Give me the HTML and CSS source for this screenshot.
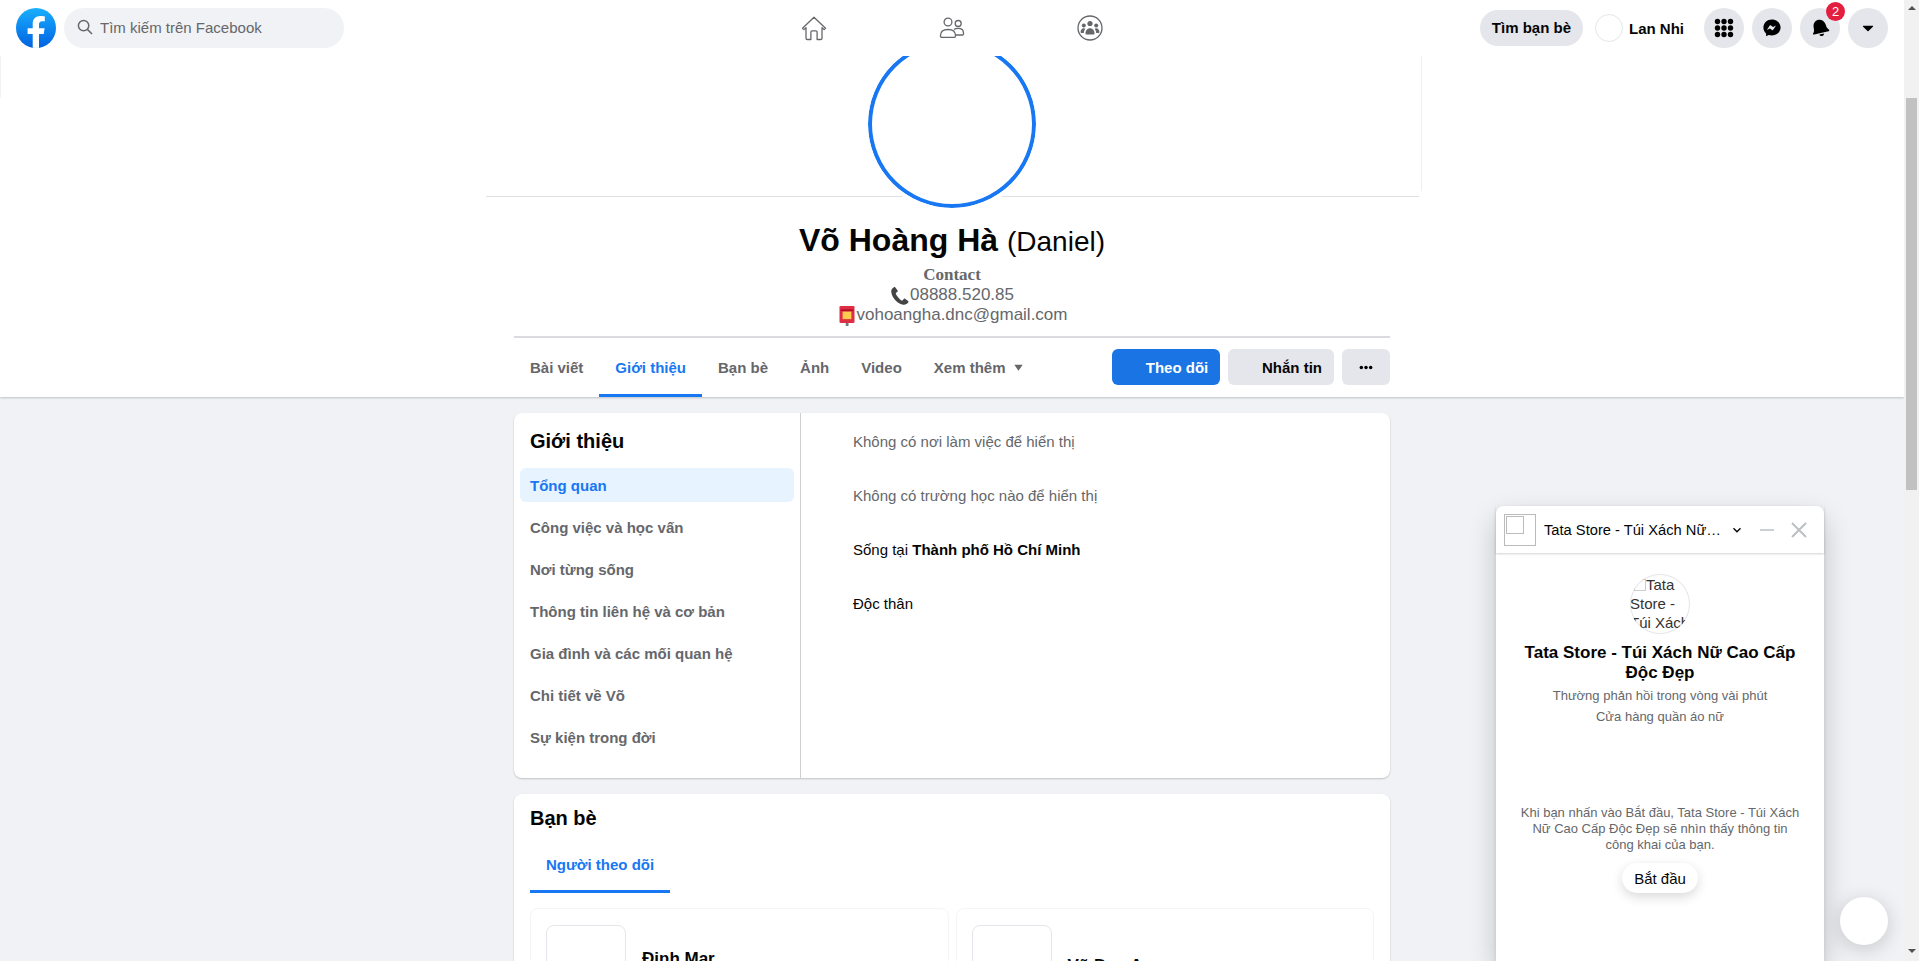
FILE: index.html
```html
<!DOCTYPE html>
<html lang="vi">
<head>
    <meta charset="UTF-8">
    <meta name="viewport" content="width=device-width, initial-scale=1.0">
    <title>Võ Hoàng Hà (Daniel) | Facebook</title>
    <link rel="stylesheet" href="styles.css">
</head>
<body>
    <div class="window">
        <div class="page">
            <!-- Top bar -->
            <header class="topbar">
                <div class="topbar-left">
                    <svg class="fb-logo" viewBox="0 0 40 40">
                        <defs>
                            <linearGradient id="fbGrad" x1="0" y1="0" x2="0" y2="1">
                                <stop offset="0" stop-color="#19afff"/>
                                <stop offset="1" stop-color="#0062e0"/>
                            </linearGradient>
                            <clipPath id="fbClip"><circle cx="20" cy="20" r="20"/></clipPath>
                        </defs>
                        <circle cx="20" cy="20" r="20" fill="url(#fbGrad)"/>
                        <path clip-path="url(#fbClip)" fill="#fff" d="M16.700 40V26h-5.100v-5.800h5.100v-4.400c0-5.100 3-7.900 7.600-7.900 2.200 0 4.500.4 4.500.4v5h-2.500c-2.500 0-3.300 1.600-3.300 3.100v3.800h5.600l-.9 5.800h-4.700v14z"/>
                    </svg>
                    <div class="search">
                        <svg class="search-icon" viewBox="0 0 16 16"><circle cx="6.600" cy="6.600" r="5.200"/><path d="M10.400 10.400l4.600 4.600"/></svg>
                        <span>Tìm kiếm trên Facebook</span>
                    </div>
                </div>
                <nav class="topbar-nav">
                    <svg class="nav-icon" viewBox="0 0 26 26"><path d="M1.500 13.200L13 2.200l11.500 11-1.400 1.400-2.100-2v10.600a1.300 1.300 0 0 1-1.300 1.300h-3.600v-7.400a1.200 1.200 0 0 0-1.200-1.200h-3.800a1.200 1.200 0 0 0-1.200 1.200v7.400H6.300A1.300 1.300 0 0 1 5 23.200V12.600l-2.100 2z"/></svg>
                    <svg class="nav-icon" viewBox="0 0 26 26"><circle cx="9" cy="7" r="3.900"/><circle cx="19.200" cy="8.500" r="3"/><path d="M1.500 20.500c0-3.800 3-6 7.500-6s7.500 2.200 7.500 6v.6a1.200 1.200 0 0 1-1.200 1.200H2.700a1.200 1.200 0 0 1-1.200-1.200z"/><path d="M15 14.600c1-.8 2.600-1.200 4.200-1.200 3.400 0 5.300 2 5.300 4.800v.8a1 1 0 0 1-1 1h-7"/></svg>
                    <svg class="nav-icon" viewBox="0 0 26 26"><circle cx="13" cy="13" r="12"/><g class="fill"><circle cx="13" cy="8.500" r="2.600"/><circle cx="6.800" cy="10.500" r="2"/><circle cx="19.200" cy="10.500" r="2"/><path d="M8.500 18.500c0-3 2-5.200 4.500-5.200s4.500 2.200 4.500 5.200c0 .6-.4 1-1 1h-7c-.6 0-1-.4-1-1z"/><path d="M3.600 17c0-2 1.200-3.800 3.200-3.800.7 0 1.200.2 1.600.5-1 1.100-1.500 2.500-1.600 4.300H4.600c-.6 0-1-.4-1-1z"/><path d="M22.400 17c0-2-1.200-3.800-3.200-3.800-.7 0-1.200.2-1.600.5 1 1.100 1.500 2.500 1.600 4.300h2.200c.6 0 1-.4 1-1z"/></g></svg>
                </nav>
                <div class="topbar-right">
                    <a class="find-friends">Tìm bạn bè</a>
                    <div class="me">
                        <span class="me-avatar"></span>
                        <span>Lan Nhi</span>
                    </div>
                    <div class="round-btns">
                        <span class="round-btn">
                            <svg class="icon-20" viewBox="0 0 20 20"><circle cx="3.500" cy="3.500" r="2.700"/><circle cx="10" cy="3.500" r="2.700"/><circle cx="16.500" cy="3.500" r="2.700"/><circle cx="3.500" cy="10" r="2.700"/><circle cx="10" cy="10" r="2.700"/><circle cx="16.500" cy="10" r="2.700"/><circle cx="3.500" cy="16.500" r="2.700"/><circle cx="10" cy="16.500" r="2.700"/><circle cx="16.500" cy="16.500" r="2.700"/></svg>
                        </span>
                        <span class="round-btn">
                            <svg class="icon-20" viewBox="0 0 20 20"><path d="M10 1.500c-4.900 0-8.600 3.500-8.600 8.100 0 2.400 1 4.500 2.700 6v2.700l2.500-1.400c1 .3 2.200.5 3.400.5 4.900 0 8.600-3.500 8.600-7.800S14.900 1.500 10 1.500z"/><path fill="#e4e6eb" d="M4.900 12l2.800-4.400c.3-.4.800-.5 1.200-.2l2.100 1.600 3-1.600-2.800 4.400c-.3.400-.8.500-1.200.2L7.900 10.400z"/></svg>
                        </span>
                        <span class="round-btn">
                            <svg class="icon-20" viewBox="0 0 20 20"><g transform="rotate(-14 10 10)"><path d="M2.800 15c-.9 0-1.300-1-.7-1.600 1-1 1.600-2.200 1.700-3.500l.2-2.300C4.300 4.300 6.900 1.600 10.200 1.600c3.300 0 5.800 2.700 6.100 6.100l.2 2.500c.1 1.300.8 2.500 1.700 3.300.6.600.2 1.700-.7 1.700z"/><path d="M7.800 16.200h4.700c-.2 1.200-1.200 2.100-2.400 2.100s-2.100-.9-2.300-2.100z"/></g></svg>
                            <span class="badge">2</span>
                        </span>
                        <span class="round-btn">
                            <svg class="icon-20" viewBox="0 0 20 20"><path d="M5.500 7.800h9c.5 0 .8.600.4 1l-4.400 4.300c-.3.300-.7.300-1 0L5.100 8.800c-.4-.4-.1-1 .4-1z"/></svg>
                        </span>
                    </div>
                </div>
            </header>

            <main class="content">
                <!-- Cover and name -->
                <section class="profile-head">
                    <div class="cover-box">
                        <div class="profile-ring"></div>
                    </div>
                    <h1 class="profile-name">Võ Hoàng Hà <span class="alt-name">(Daniel)</span></h1>
                    <div class="bio">
                        <div class="bio-title">Contact</div>
                        <div class="bio-line">
                            <svg class="bio-icon" viewBox="0 0 16 16"><path d="M3.200 1c-1.300.7-2.400 2-2.200 3.600.4 4.700 5.200 10 9.700 10.400 1.600.2 3.200-.7 4-2 .2-.4.1-.8-.2-1L12 10.200c-.4-.2-.8-.1-1 .2l-.8 1c-.3.3-.7.4-1 .2C7.500 10.400 5.600 8.300 4.700 6.400c-.2-.4-.1-.8.2-1l1-.8c.3-.3.4-.7.2-1L4.300 1.200C4 .9 3.600.8 3.200 1z"/></svg>08888.520.85
                        </div>
                        <div class="bio-line">
                            <svg class="bio-icon" viewBox="0 0 16 16"><rect x="7" y="13" width="2.200" height="3" fill="#777"/><rect x="2" y="0" width="12" height="13.500" rx="1" fill="#dd2e44"/><rect x="3" y="2.800" width="10" height="1" fill="#a0041e"/><rect x="4.500" y="4.500" width="7" height="6" fill="#ffcc4d"/></svg>vohoangha.dnc@gmail.com
                        </div>
                    </div>
                    <div class="profile-tabs">
                        <div class="tab-list">
                            <a class="tab">Bài viết</a>
                            <a class="tab active">Giới thiệu</a>
                            <a class="tab">Bạn bè</a>
                            <a class="tab">Ảnh</a>
                            <a class="tab">Video</a>
                            <a class="tab">Xem thêm <svg class="tab-caret" viewBox="0 0 10 10"><path d="M1.200 2.500h7.600L5 8z"/></svg></a>
                        </div>
                        <div class="tab-actions">
                            <button class="btn btn-follow">Theo dõi</button>
                            <button class="btn btn-message">Nhắn tin</button>
                            <button class="btn btn-more"><svg viewBox="0 0 12 4"><circle cx="2" cy="2" r="1.500"/><circle cx="6" cy="2" r="1.500"/><circle cx="10" cy="2" r="1.500"/></svg></button>
                        </div>
                    </div>
                </section>

                <div class="columns">
                    <!-- About -->
                    <section class="card about">
                        <div class="about-menu">
                            <h2 class="card-title">Giới thiệu</h2>
                            <ul class="about-list">
                                <li class="selected">Tổng quan</li>
                                <li>Công việc và học vấn</li>
                                <li>Nơi từng sống</li>
                                <li>Thông tin liên hệ và cơ bản</li>
                                <li>Gia đình và các mối quan hệ</li>
                                <li>Chi tiết về Võ</li>
                                <li>Sự kiện trong đời</li>
                            </ul>
                        </div>
                        <div class="about-body">
                            <p class="muted">Không có nơi làm việc để hiển thị</p>
                            <p class="muted">Không có trường học nào để hiển thị</p>
                            <p>Sống tại <b>Thành phố Hồ Chí Minh</b></p>
                            <p>Độc thân</p>
                        </div>
                    </section>

                    <!-- Friends -->
                    <section class="card friends">
                        <h2 class="card-title">Bạn bè</h2>
                        <div class="friends-tabs"><a class="friends-tab">Người theo dõi</a></div>
                        <div class="friend-grid">
                            <div class="friend">
                                <div class="friend-photo"></div>
                                <div class="friend-name">Đinh Mar</div>
                            </div>
                            <div class="friend">
                                <div class="friend-photo"></div>
                                <div class="friend-name second">Vũ Duy An</div>
                            </div>
                        </div>
                    </section>
                </div>
            </main>

            <!-- Chat plugin -->
            <aside class="chat">
                <div class="chat-head">
                    <span class="broken-img"></span>
                    <span class="chat-title">Tata Store - Túi Xách Nữ Cao Cấp Độc Đẹp</span>
                    <svg class="chat-chevron" viewBox="0 0 10 10"><path d="M1.500 3.300L5 6.800l3.500-3.500"/></svg>
                    <svg class="chat-min" viewBox="0 0 16 16"><path d="M1 8h14"/></svg>
                    <svg class="chat-close" viewBox="0 0 16 16"><path d="M1 1l14 14M15 1L1 15"/></svg>
                </div>
                <div class="chat-body">
                    <div class="chat-avatar"><span class="chat-alt"><span class="broken-mini"></span>Tata Store - Túi Xách</span></div>
                    <div class="chat-name">Tata Store - Túi Xách Nữ Cao Cấp Độc Đẹp</div>
                    <div class="chat-note">Thường phản hồi trong vòng vài phút</div>
                    <div class="chat-note">Cửa hàng quần áo nữ</div>
                    <div class="chat-spacer"></div>
                    <div class="chat-terms">Khi bạn nhấn vào Bắt đầu, Tata Store - Túi Xách Nữ Cao Cấp Độc Đẹp sẽ nhìn thấy thông tin công khai của bạn.</div>
                    <button class="chat-start">Bắt đầu</button>
                </div>
            </aside>
            <div class="chat-bubble"></div>
        </div>

        <!-- Scrollbar -->
        <div class="scrollbar">
            <span class="arrow-up"></span>
            <span class="scroll-thumb"></span>
            <span class="arrow-down"></span>
        </div>
    </div>
</body>
</html>
```

FILE: styles.css
```css
/* General */
* {
    box-sizing: border-box;
}

html, body {
    margin: 0;
    padding: 0;
    height: 100%;
    overflow: hidden;
}

body {
    font-family: 'Liberation Sans', Arial, sans-serif;
    font-size: 15px;
    color: #050505;
    background-color: #f0f2f5;
}

.window {
    display: flex;
    height: 961px;
}

.page {
    position: relative;
    flex: 1;
    min-width: 0;
    display: flex;
    flex-direction: column;
    overflow: hidden;
}

/* Top bar */
.topbar {
    flex: none;
    height: 56px;
    display: grid;
    grid-template-columns: 1fr auto 1fr;
    align-items: center;
    padding: 0 16px;
    background-color: #fff;
    position: relative;
    z-index: 2;
}

.topbar-left {
    display: flex;
    align-items: center;
    gap: 8px;
}

.fb-logo {
    width: 40px;
    height: 40px;
}

.search {
    width: 280px;
    height: 40px;
    display: flex;
    align-items: center;
    gap: 7px;
    padding: 0 0 2px 13px;
    border-radius: 20px;
    background-color: #f0f2f5;
    color: #65676b;
}

.search-icon {
    width: 16px;
    height: 16px;
    fill: none;
    stroke: #65676b;
    stroke-width: 1.5;
}

.topbar-nav {
    display: flex;
    gap: 112px;
    align-items: center;
}

.nav-icon {
    width: 26px;
    height: 26px;
    fill: none;
    stroke: #65676b;
    stroke-width: 1.3;
    stroke-linejoin: round;
}

.nav-icon .fill {
    fill: #65676b;
    stroke: none;
}

.topbar-right {
    display: flex;
    align-items: center;
    justify-content: flex-end;
}

.find-friends {
    height: 36px;
    line-height: 36px;
    padding: 0 12px;
    border-radius: 18px;
    background-color: #e4e6eb;
    font-weight: bold;
}

.me {
    display: flex;
    align-items: center;
    gap: 6px;
    margin-left: 12px;
    font-weight: bold;
}

.me-avatar {
    width: 28px;
    height: 28px;
    border-radius: 50%;
    border: 1px solid #e4e6eb;
}

.round-btns {
    display: flex;
    gap: 8px;
    margin-left: 20px;
}

.round-btn {
    position: relative;
    width: 40px;
    height: 40px;
    display: flex;
    align-items: center;
    justify-content: center;
    border-radius: 50%;
    background-color: #e4e6eb;
}

.icon-20 {
    width: 20px;
    height: 20px;
}

.badge {
    position: absolute;
    top: -6px;
    right: -5px;
    width: 19px;
    height: 19px;
    line-height: 19px;
    border-radius: 50%;
    text-align: center;
    font-size: 13px;
    color: #fff;
    background-color: #e41e3f;
}

/* Scrollbar */
.scrollbar {
    flex: none;
    width: 15px;
    display: flex;
    flex-direction: column;
    align-items: center;
    background-color: #f1f1f1;
}

.arrow-up, .arrow-down {
    flex: none;
    width: 0;
    height: 0;
    border-left: 4px solid transparent;
    border-right: 4px solid transparent;
}

.arrow-up {
    margin-top: 6px;
    border-bottom: 4px solid #505050;
}

.arrow-down {
    margin-top: 459px;
    border-top: 4px solid #505050;
}

.scroll-thumb {
    flex: none;
    width: 11px;
    height: 392px;
    margin-top: 88px;
    background-color: #c1c1c1;
}

/* Profile head */
.content {
    flex: 1;
    min-height: 0;
    overflow: hidden;
}

.profile-head {
    position: relative;
    height: 341px;
    background-color: #fff;
    box-shadow: 0 1px 2px rgba(0, 0, 0, 0.2);
}

.profile-head::before {
    content: "";
    position: absolute;
    top: 0;
    left: 0;
    width: 1px;
    height: 42px;
    background-color: #f2f2f2;
}

.cover-box {
    position: relative;
    width: 933px;
    height: 141px;
    margin-left: 486px;
    border-bottom: 1px solid #dddfe2;
}

.cover-box::after {
    content: "";
    position: absolute;
    top: 0;
    left: 935px;
    width: 1px;
    height: 135px;
    background-color: #f0f0f0;
}

.profile-ring {
    position: absolute;
    left: 378px;
    bottom: -16px;
    width: 176px;
    height: 176px;
    border-radius: 50%;
    background-color: #fff;
    border: 4px solid #fff;
    box-shadow: inset 0 0 0 4px #1877f2;
}

.profile-name {
    margin: 24px 0 0;
    text-align: center;
    font-size: 32px;
    line-height: 38px;
    font-weight: bold;
    color: #050505;
}

.alt-name {
    font-size: 28px;
    font-weight: normal;
}

.bio {
    margin-top: 4px;
    text-align: center;
    font-size: 17px;
    line-height: 20px;
    color: #65676b;
}

.bio-title {
    font-family: 'Liberation Serif', serif;
    font-size: 17px;
    font-weight: bold;
}

.bio-icon {
    width: 20px;
    height: 20px;
    margin: -2px 0;
    vertical-align: -4px;
    fill: #444;
}

.profile-tabs {
    width: 876px;
    height: 61px;
    margin: 11px auto 0;
    display: flex;
    justify-content: space-between;
    border-top: 2px solid #d9dbdf;
}

.tab-list {
    display: flex;
}

.tab {
    display: flex;
    align-items: center;
    gap: 7px;
    padding: 0 16px;
    height: 59px;
    font-weight: bold;
    color: #65676b;
}

.tab.active {
    color: #1877f2;
    border-bottom: 3px solid #1877f2;
    padding-top: 3px;
}

.tab-caret {
    width: 11px;
    height: 11px;
    fill: #65676b;
}

.tab-actions {
    display: flex;
    gap: 8px;
    padding-top: 11px;
}

.btn {
    height: 36px;
    border: none;
    border-radius: 6px;
    font-family: inherit;
    font-size: 15px;
    font-weight: bold;
}

.btn-follow {
    width: 108px;
    padding-left: 28px;
    background-color: #1b74e4;
    color: #fff;
}

.btn-message {
    width: 106px;
    padding-left: 28px;
    background-color: #e4e6eb;
    color: #050505;
}

.btn-more {
    width: 48px;
    background-color: #e4e6eb;
}

.btn-more svg {
    width: 14px;
    height: 5px;
    display: block;
    margin: 0 auto;
}

/* Cards */
.columns {
    width: 876px;
    margin: 16px auto 0;
}

.card {
    background-color: #fff;
    border-radius: 8px;
    box-shadow: 0 1px 2px rgba(0, 0, 0, 0.2);
}

.card-title {
    margin: 0;
    font-size: 20px;
    line-height: 24px;
    font-weight: bold;
}

.about {
    display: flex;
    height: 365px;
}

.about-menu {
    width: 287px;
    padding: 16px 6px 0;
    border-right: 1px solid #ced0d4;
}

.about-menu .card-title {
    padding-left: 10px;
}

.about-list {
    list-style: none;
    margin: 15px 0 0;
    padding: 0;
    display: flex;
    flex-direction: column;
    gap: 8px;
}

.about-list li {
    height: 34px;
    line-height: 36px;
    padding-left: 10px;
    border-radius: 6px;
    font-weight: bold;
    color: #65676b;
}

.about-list li.selected {
    color: #1877f2;
    background-color: #e7f3ff;
}

.about-body {
    flex: 1;
    padding: 20px 0 0 52px;
}

.about-body p {
    margin: 0 0 36px;
    line-height: 18px;
}

.about-body p.muted {
    color: #65676b;
}

.friends {
    margin-top: 16px;
    padding: 12px 16px 16px;
    height: 320px;
}

.friends-tabs {
    margin-top: 11px;
    display: flex;
}

.friends-tab {
    height: 52px;
    line-height: 47px;
    padding: 0 16px;
    font-weight: bold;
    color: #1877f2;
    border-bottom: 3px solid #1877f2;
}

.friend-grid {
    display: grid;
    grid-template-columns: 1fr 1fr;
    gap: 7px;
    margin-top: 15px;
}

.friend {
    display: flex;
    align-items: flex-start;
    gap: 16px;
    height: 120px;
    padding: 16px 15px;
    border: 1px solid #f5f5f5;
    border-radius: 8px;
}

.friend-photo {
    flex: none;
    width: 80px;
    height: 80px;
    border: 1px solid #e4e6eb;
    border-radius: 8px;
}

.friend-name {
    margin-top: 24px;
    font-size: 17px;
    line-height: 20px;
    font-weight: bold;
}

.friend-name.second {
    margin-top: 31px;
}

/* Chat plugin */
.chat {
    position: absolute;
    top: 506px;
    left: 1496px;
    width: 328px;
    height: 455px;
    background-color: #fff;
    border-radius: 8px 8px 0 0;
    box-shadow: 0 12px 28px rgba(0, 0, 0, 0.2), 0 2px 4px rgba(0, 0, 0, 0.1);
    z-index: 3;
}

.chat-head {
    height: 47px;
    display: flex;
    align-items: center;
    padding: 0 16px 0 8px;
    box-shadow: 0 1px 2px rgba(0, 0, 0, 0.18);
}

.broken-img {
    position: relative;
    flex: none;
    width: 32px;
    height: 32px;
    border: 1px solid #bbb;
}

.broken-img::after {
    content: "";
    position: absolute;
    top: 1px;
    left: 1px;
    width: 16px;
    height: 16px;
    border: 1px solid #bbb;
}

.chat-title {
    flex: none;
    width: 180px;
    margin-left: 8px;
    font-size: 14.7px;
    white-space: nowrap;
    overflow: hidden;
    text-overflow: ellipsis;
}

.chat-chevron {
    width: 10px;
    height: 10px;
    margin-left: 8px;
    fill: none;
    stroke: #050505;
    stroke-width: 1.4;
}

.chat-min {
    width: 16px;
    height: 16px;
    margin-left: 17px;
    fill: none;
    stroke: #bcc0c4;
    stroke-width: 1.5;
}

.chat-close {
    width: 16px;
    height: 16px;
    margin-left: 16px;
    fill: none;
    stroke: #bcc0c4;
    stroke-width: 2;
}

.chat-body {
    display: flex;
    flex-direction: column;
    align-items: center;
    padding: 21px 24px 0;
    text-align: center;
}

.chat-avatar {
    width: 60px;
    height: 60px;
    overflow: hidden;
    border-radius: 50%;
    box-shadow: inset 0 0 0 1px #e4e6eb;
    font-size: 15px;
    line-height: 19px;
    color: #333;
    text-align: left;
}

.chat-alt {
    display: block;
    width: 64px;
    padding-top: 1px;
}

.broken-mini {
    display: inline-block;
    width: 12px;
    height: 12px;
    margin-left: 4px;
    border: 1px solid #ccc;
    vertical-align: -1px;
}

.chat-name {
    margin-top: 9px;
    font-size: 17px;
    line-height: 20px;
    font-weight: bold;
}

.chat-note {
    margin-top: 5px;
    font-size: 13px;
    line-height: 16px;
    color: #65676b;
}

.chat-spacer {
    height: 80px;
}

.chat-terms {
    font-size: 13px;
    line-height: 16px;
    color: #65676b;
}

.chat-start {
    height: 30px;
    margin-top: 10px;
    padding: 0 12px;
    border: none;
    border-radius: 15px;
    font-family: inherit;
    font-size: 15px;
    color: #050505;
    background-color: #fff;
    box-shadow: 0 4px 12px rgba(0, 0, 0, 0.15);
}

.chat-bubble {
    position: absolute;
    top: 897px;
    left: 1840px;
    width: 48px;
    height: 48px;
    border-radius: 50%;
    background-color: #fff;
    box-shadow: 0 4px 20px rgba(0, 0, 0, 0.18);
    z-index: 3;
}
```
